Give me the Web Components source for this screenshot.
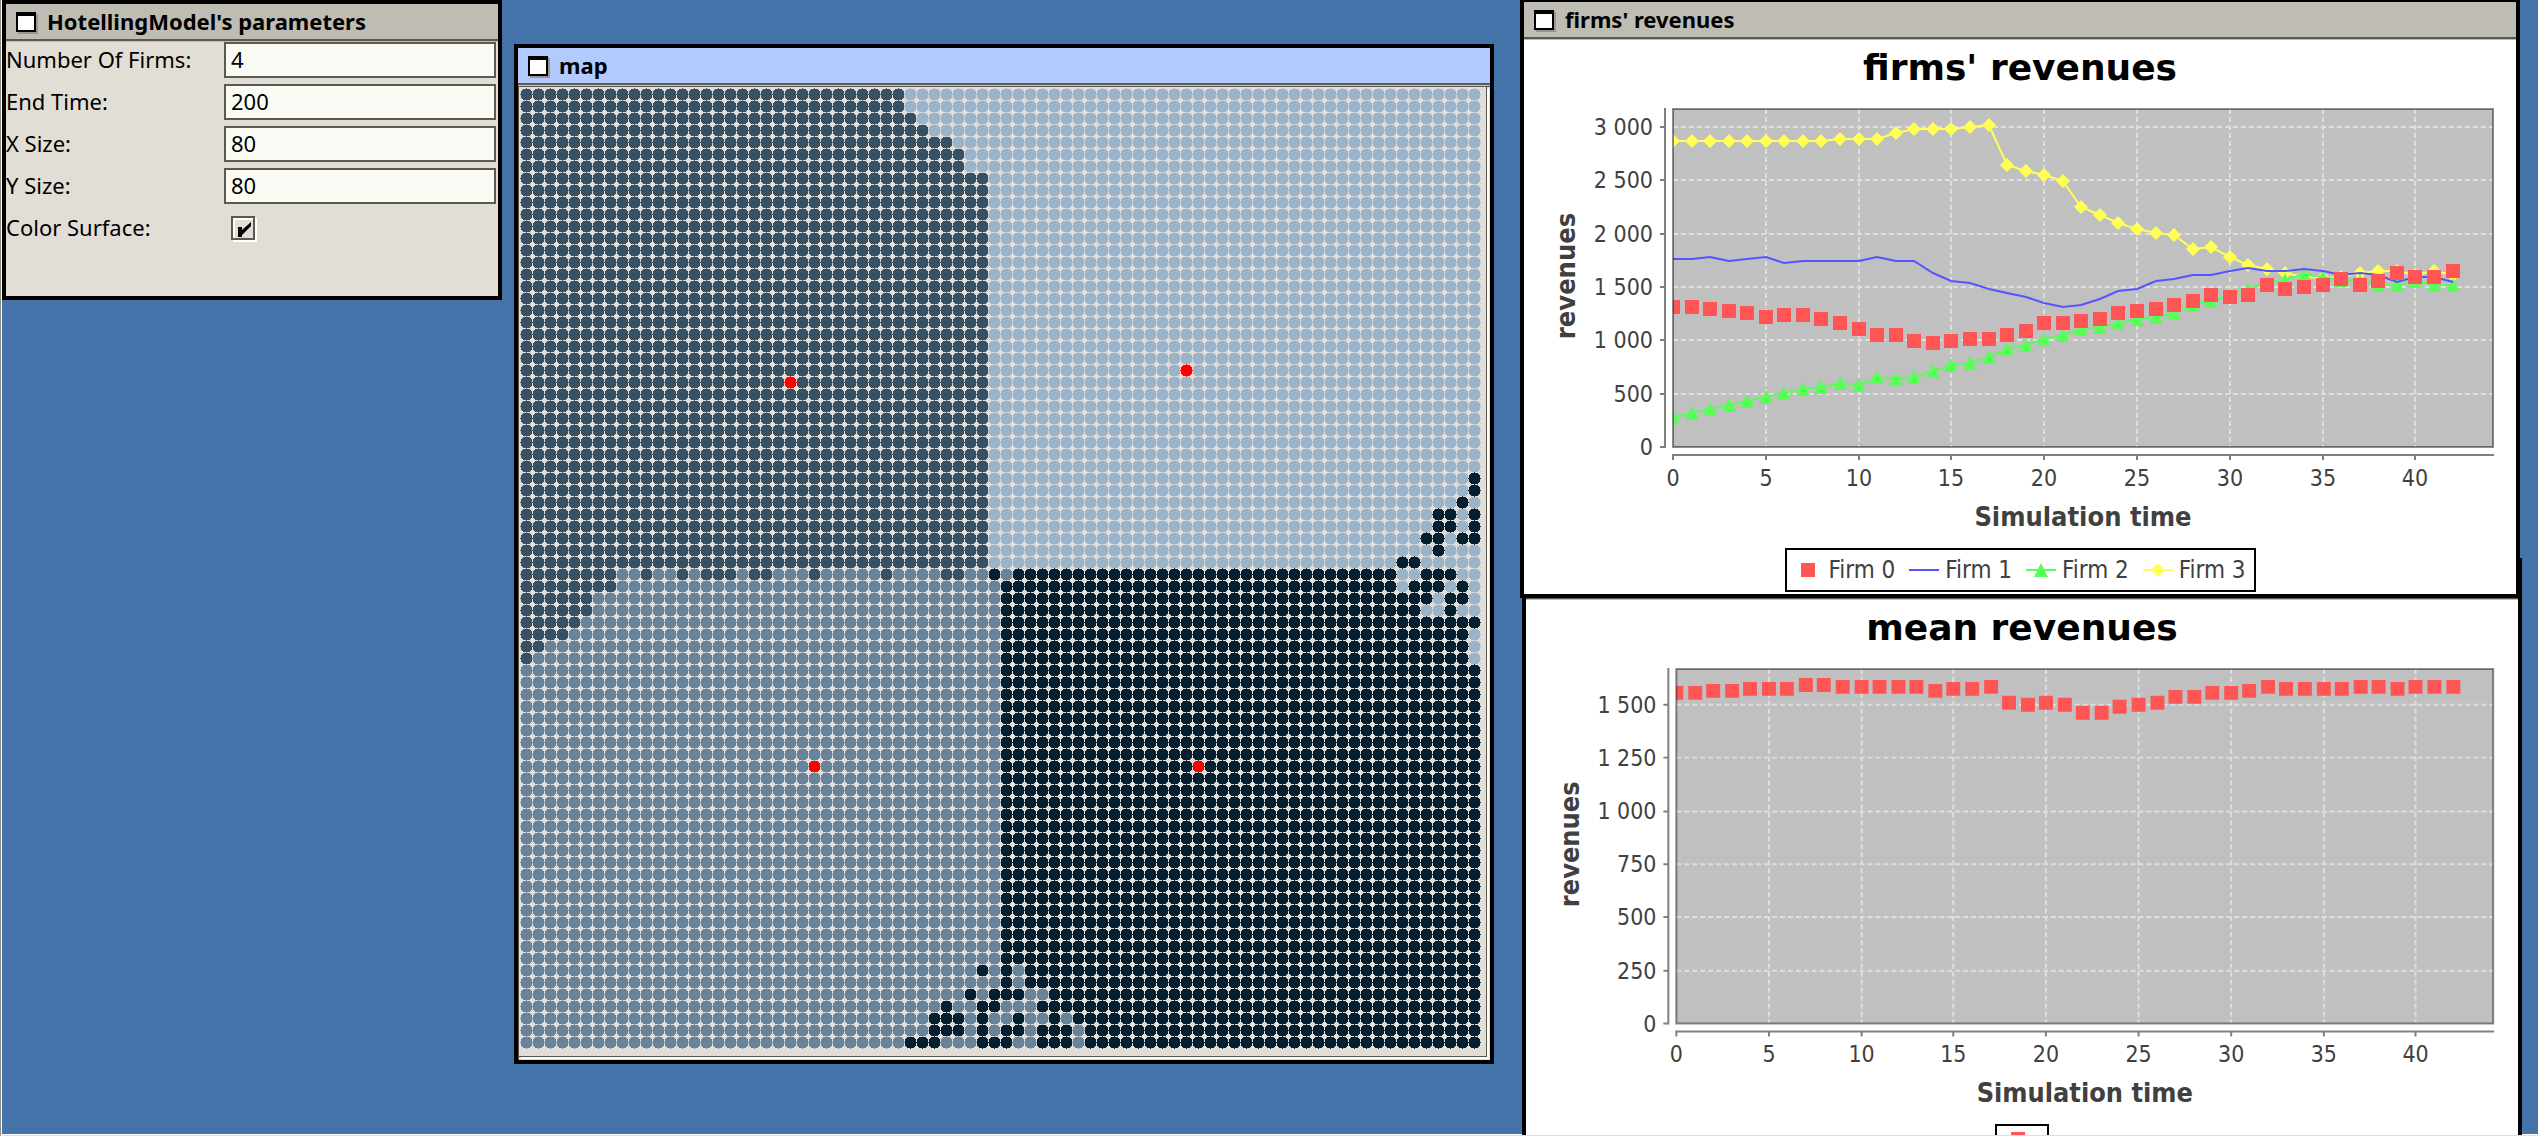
<!DOCTYPE html>
<html lang="en">
<head>
<meta charset="utf-8">
<title>HotellingModel</title>
<style>
html, body { height: 100%; margin: 0; }
body { overflow: hidden; background: #4473aa; }
</style>
</head>
<body>
<sim-desktop>
  <sim-window id="params" heading="HotellingModel's parameters"><model-parameters></model-parameters></sim-window>
  <sim-window id="map" heading="map" active><consumer-map></consumer-map></sim-window>
  <sim-window id="mean" heading="mean revenues"><line-chart source="mean" heading="mean revenues"></line-chart></sim-window>
  <sim-window id="firms" heading="firms' revenues"><line-chart source="firms" heading="firms' revenues"></line-chart></sim-window>
</sim-desktop>
<script>
class SimDesktop extends HTMLElement {
  constructor() {
    super();
    this.attachShadow({ mode: 'open' }).innerHTML = `
      <style>
        :host { display: block; position: relative; box-sizing: border-box; height: 100%; overflow: hidden;
          background: #4473aa; border-left: 1px solid #8c8980; border-bottom: 1px solid #e2ded6;
          box-shadow: inset 1px -1px #fff; font-family: "Noto Sans", sans-serif; }
        ::slotted(sim-window) { position: absolute; }
        ::slotted(#params) { left: 1px; top: 0; width: 500px; height: 300px; }
        ::slotted(#map) { left: 513px; top: 44px; width: 980px; height: 1020px; }
        ::slotted(#mean) { left: 1521px; top: 558px; width: 1000px; height: 600px; }
        ::slotted(#firms) { left: 1519px; top: -2px; width: 1000px; height: 600px; }
      </style>
      <slot></slot>`;
  }
}

class SimWindow extends HTMLElement {
  constructor() {
    super();
    this.attachShadow({ mode: 'open' }).innerHTML = `
      <style>
        :host { display: flex; flex-direction: column; box-sizing: border-box; border: 4px solid #000;
          background: #e2ded6; --bar: #bfbcb3; }
        :host([active]) { --bar: #b3caff; }
        header { display: flex; align-items: center; gap: 11px; height: 35px; padding: 0 10px;
          flex: none; background: var(--bar); border-bottom: 2px solid #5a5851; box-shadow: 0 1px var(--bar); margin-bottom: 1px; }
        button { flex: none; width: 20px; height: 20px; margin: 0; padding: 0; border: 2px solid #000; border-top-width: 4px;
          background: #fff; box-shadow: 2px 2px #9a968c; }
        h1 { margin: 0; padding-bottom: 2px; font-size: 22px; line-height: 32px; font-weight: 700; color: #000; white-space: nowrap; }
        main { flex: 1; min-height: 0; }
      </style>
      <header><button type="button" aria-label="Window menu"></button><h1></h1></header>
      <main><slot></slot></main>`;
  }
  connectedCallback() { this.shadowRoot.querySelector('h1').textContent = this.getAttribute('heading'); }
}

class ModelParameters extends HTMLElement {
  constructor() {
    super();
    const fields = [['Number Of Firms:', 4], ['End Time:', 200], ['X Size:', 80], ['Y Size:', 80]];
    this.attachShadow({ mode: 'open' }).innerHTML = `
      <style>
        :host { display: block; }
        form { display: grid; grid-template-columns: 218px 1fr; row-gap: 6px; padding-right: 2px; align-items: center;
          font-size: 22px; line-height: 34px; color: #000; }
        label { padding-bottom: 2px; }
        input[type=text] { box-sizing: border-box; width: 100%; height: 36px; margin: 0; padding: 0 5px 2px;
          border: 2px solid #5a5a52; border-radius: 0; outline: none; background: #fafbf5; font: inherit; color: inherit; line-height: 30px; }
        input[type=checkbox] { appearance: none; box-sizing: border-box; display: block; width: 24px; height: 24px; margin: 5px 7px;
          border: 2px solid #5a5a52; box-shadow: 2px 2px #fff, inset 2px 2px #fff; }
        input[type=checkbox]:checked::before { content: ""; display: block; width: 20px; height: 20px; background: #000;
          clip-path: polygon(5px 9px, 9px 9px, 9px 12px, 18px 4px, 18px 8px, 9px 17px, 9px 19px, 5px 19px); }
      </style>
      <form>
        ${fields.map(([n, v], i) => `<label for="f${i}">${n}</label><input type="text" id="f${i}" value="${v}">`).join('')}
        <label for="color">Color Surface:</label><input type="checkbox" id="color" checked>
      </form>`;
  }
}

/* Each consumer is a dot on an 80 x 80 grid, coloured by the firm it buys from. */
const A = '#375064', B = '#9bb4ca', C = '#69849a', D = '#051e30', FIRM = '#ff0000';
const northWest = [32, 32, 33, 34, 36, 37, 37];
const southWest = { 41: 8, 42: 6, 43: 6, 44: 5, 45: 4, 46: 2, 47: 1 };
/* Runs of "first-last" columns that differ from the plain quadrants. */
const exceptions = [
  [32, D, '79'], [33, D, '79'], [34, D, '78'], [35, D, '76-77 79'], [36, D, '76-77 79'], [37, D, '75-76 78-79'],
  [38, D, '76'], [39, D, '73-74'],
  [40, A, '0-7 10 13 15-17 19-20 24 30 35-36'], [40, D, '39'], [40, C, '40'], [40, B, '73-74 78-79'],
  [41, B, '73 77 79'], [42, B, '76 79'], [43, B, '75-76 78-79'], [45, B, '79'], [46, B, '79'], [47, B, '79'],
  [73, D, '38'], [73, C, '41'], [74, C, '41'], [75, D, '37 39'], [75, C, '42-43'],
  [76, D, '35 38-39'], [76, C, '40-42'], [77, D, '34-36 38'], [77, C, '39-40 42-43 45'],
  [78, D, '34-36 38'], [78, C, '42 46'], [79, D, '32-34 38-39'], [79, C, '41-42 46'],
  [24, FIRM, '22'], [23, FIRM, '55'], [56, FIRM, '24 56']
];
class ConsumerMap extends HTMLElement {
  constructor() {
    super();
    const grid = Array.from({ length: 80 }, (_, r) => Array.from({ length: 80 }, (_, c) => {
      if (r < 40) return c < (northWest[r] ?? 39) ? A : B;
      if (c < (southWest[r] ?? 0)) return A;
      return c < 40 ? C : D;
    }));
    for (const [row, color, runs] of exceptions)
      for (const run of runs.split(' ')) {
        const [from, to = from] = run.split('-').map(Number);
        for (let c = from; c <= to; c++) grid[row][c] = color;
      }
    const dot = 'h1v1h3v1h1v1h1v3h1v1h-1v3h-1v1h-1v1h-3v1h-1v-1h-3v-1h-1v-1h-1v-3h-1v-1h1v-3h1v-1h1v-1h3z';
    const paths = {};
    grid.forEach((line, r) => line.forEach((color, c) => {
      paths[color] = (paths[color] || '') + `M${c * 12 + 6} ${r * 12}${dot}`;
    }));
    this.attachShadow({ mode: 'open' }).innerHTML = `
      <style>
        :host { display: block; box-sizing: border-box; height: 100%; border: solid #55534d; border-width: 1px 0 0 1px; }
        div { box-sizing: border-box; height: calc(100% - 3px); margin-right: 3px; border: solid #55534d; border-width: 0 1px 1px 0;
          box-shadow: 2px 2px #fff; padding: 1px; }
        svg { display: block; max-width: 100%; }
      </style>
      <div><svg width="961" height="961" viewBox="0 0 961 961" shape-rendering="crispEdges" role="img" aria-label="map">
        ${Object.entries(paths).map(([color, d]) => `<path fill="${color}" d="${d}"/>`).join('')}
      </svg></div>`;
  }
}

const charts = {
  firms: {
    max: 3169, step: 500, bottom: 347,
    series: [
      { name: 'Firm 0', color: '#ff5555', shape: 'square', data: [1312,1312,1294,1275,1256,1219,1237,1237,1200,1162,1106,1050,1050,994,975,994,1012,1012,1050,1087,1162,1162,1181,1200,1256,1275,1294,1331,1369,1425,1406,1425,1519,1481,1500,1519,1575,1519,1556,1631,1594,1594,1650] },
      { name: 'Firm 1', color: '#5555ff', line: true, data: [1766,1766,1784,1744,1766,1784,1725,1744,1744,1744,1744,1784,1744,1744,1631,1556,1537,1481,1444,1409,1353,1315,1334,1390,1462,1481,1556,1578,1612,1612,1653,1675,1653,1650,1672,1650,1615,1631,1612,1550,1597,1597,1550] },
      { name: 'Firm 2', color: '#55ff55', line: true, shape: 'triangle', data: [281,319,356,394,431,469,506,544,562,600,581,656,637,656,712,769,787,844,919,956,1012,1050,1106,1125,1162,1200,1219,1256,1331,1369,1425,1484,1537,1566,1622,1594,1566,1556,1519,1519,1556,1519,1519] },
      { name: 'Firm 3', color: '#ffff55', line: true, shape: 'diamond', data: [2869,2869,2869,2869,2869,2869,2869,2869,2869,2884,2887,2887,2944,2981,2981,2981,3000,3019,2644,2587,2550,2494,2250,2175,2100,2044,2006,1987,1856,1875,1781,1706,1669,1631,1594,1580,1594,1631,1650,1650,1612,1650,1612] }
    ]
  },
  mean: {
    max: 1669, step: 250, bottom: 365,
    series: [
      { name: '', color: '#ff5555', shape: 'square', data: [1557,1557,1566,1566,1576,1576,1576,1595,1595,1585,1585,1585,1585,1585,1566,1576,1576,1585,1510,1500,1510,1500,1463,1463,1490,1500,1510,1537,1537,1557,1557,1566,1585,1576,1576,1576,1576,1585,1585,1576,1585,1585,1585] }
    ]
  }
};
const marker = {
  square: (x, y) => `M${x - 7} ${y - 7}h14v14h-14z`,
  triangle: (x, y) => `M${x} ${y - 7}l7 14h-14z`,
  diamond: (x, y) => `M${x} ${y - 7}l7 7l-7 7l-7 -7z`
};
class LineChart extends HTMLElement {
  connectedCallback() {
    const { max, step, bottom, series } = charts[this.getAttribute('source')];
    const left = 149, right = 969, top = 9, unit = 18.56;
    const X = v => Math.round(left + v * unit);
    const Y = v => Math.round(bottom - v * (bottom - top) / max);
    let grid = '', ticks = '', labels = '';
    for (let v = 0; v <= 40; v += 5) {
      if (v) grid += `M${X(v)} ${top}V${bottom}`;
      ticks += `M${X(v)} ${bottom + 8}v5`;
      labels += `<text x="${X(v)}" y="${bottom + 39}" text-anchor="middle">${v}</text>`;
    }
    for (let v = 0; v <= max; v += step) {
      if (v) grid += `M${left} ${Y(v)}H${right}`;
      ticks += `M${left - 8} ${Y(v)}h-5`;
      labels += `<text x="${left - 20}" y="${Y(v) + 8}" text-anchor="end">${v < 1000 ? v : Math.floor(v / 1000) + ' ' + String(v % 1000).padStart(3, '0')}</text>`;
    }
    const plots = [...series].reverse().map(s => {
      const line = s.line ? `<polyline fill="none" stroke="${s.color}" stroke-width="2" points="${s.data.map((v, i) => X(i) + ',' + Y(v)).join(' ')}"/>` : '';
      const marks = s.shape ? `<path fill="${s.color}" d="${s.data.map((v, i) => marker[s.shape](X(i), Y(v))).join('')}"/>` : '';
      return line + marks;
    }).join('');
    const legend = series.map(s => `<li><svg width="30" height="14" viewBox="0 0 30 14" aria-hidden="true">
      ${s.line ? `<path d="M0 7H30" stroke="${s.color}" stroke-width="2"/>` : ''}${s.shape ? `<path fill="${s.color}" d="${marker[s.shape](15, 7)}"/>` : ''}</svg><span>${s.name}</span></li>`).join('');
    this.attachShadow({ mode: 'open' }).innerHTML = `
      <style>
        :host { display: flex; flex-direction: column; align-items: center; background: #fff; height: 100%;
          font-family: "DejaVu Sans Condensed", "DejaVu Sans", sans-serif; color: #404040; }
        h2 { margin: 0; font-family: "DejaVu Sans", sans-serif; font-size: 36px; line-height: 56px; height: 60px; font-weight: 700; color: #000; }
        .plot { display: block; width: 100%; height: auto; }
        text { font-size: 23px; fill: #404040; }
        .axis { font-size: 27px; font-weight: 700; }
        ul { display: flex; gap: 14px; box-sizing: border-box; margin: 4px 0 0; padding: 6px 8px 6px 6px; border: 2px solid #000; list-style: none;
          font-size: 24px; line-height: 28px; }
        li { display: flex; align-items: center; gap: 6px; }
        li svg { display: block; flex: none; }
      </style>
      <h2>${this.getAttribute('heading')}</h2>
      <svg class="plot" viewBox="0 0 992 ${bottom + 97}">
        <clipPath id="area"><path d="M${left} ${top}H${right}V${bottom}H${left}z"/></clipPath>
        <path fill="#c0c0c0" d="M${left} ${top}H${right}V${bottom}H${left}z"/>
        <path fill="none" stroke="#dedede" stroke-width="2" stroke-dasharray="5 3" d="${grid}"/>
        <g clip-path="url(#area)">${plots}</g>
        <path fill="none" stroke="#000" stroke-opacity=".45" stroke-width="2" d="M${left} ${top}H${right}V${bottom}H${left}z"/>
        <path fill="none" stroke="#808080" stroke-width="2" d="M${left - 8} ${top - 1}V${bottom + 1}M${left - 1} ${bottom + 8}H${right + 1}"/>
        <path fill="none" stroke="#808080" stroke-width="2" d="${ticks}"/>
        ${labels}
        <text class="axis" x="${(left + right) / 2}" y="${bottom + 79}" text-anchor="middle">Simulation time</text>
        <text class="axis" transform="translate(51 ${(top + bottom) / 2 - 2}) rotate(-90)" text-anchor="middle">revenues</text>
      </svg>
      <ul>${legend}</ul>`;
  }
}
customElements.define('sim-desktop', SimDesktop);
customElements.define('sim-window', SimWindow);
customElements.define('model-parameters', ModelParameters);
customElements.define('consumer-map', ConsumerMap);
customElements.define('line-chart', LineChart);
</script>
</body>
</html>
